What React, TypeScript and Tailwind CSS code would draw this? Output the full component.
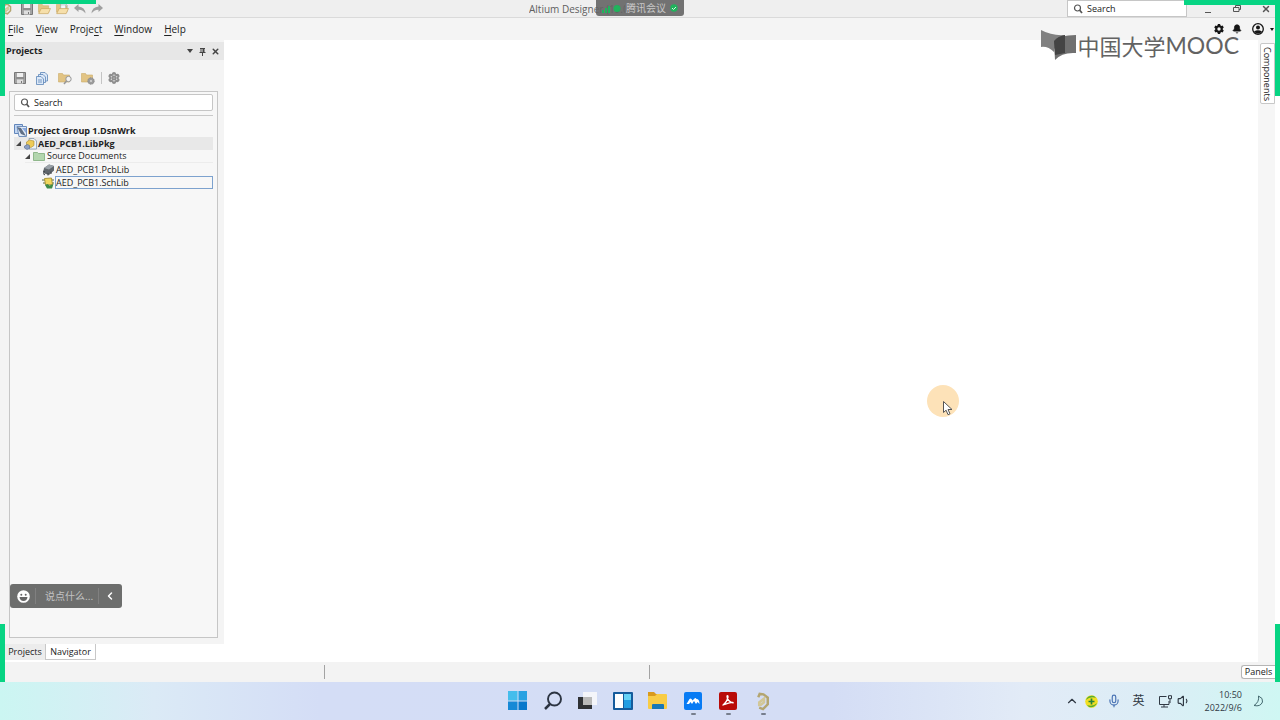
import type { ReactNode } from "react";
import {
  Bell,
  ChevronLeft,
  ChevronUp,
  Mic,
  Settings,
  Volume1,
  X,
} from "lucide-react";

function Disk({ className }: { className: string }) {
  return (
    <svg viewBox="0 0 12 12" className={className} aria-hidden>
      <path d="M.5.5h11v11H.5z" fill="#a4a4a4" stroke="#787878" />
      <path d="M3 1h6v4H3z" fill="#efefef" />
      <path d="M3 7.500h6v4H3z" fill="#dedede" />
      <path d="M2 6h8" stroke="#787878" />
      <path d="M7 9h1v2H7z" fill="#787878" />
    </svg>
  );
}

function FolderIcon({ className, badge }: { className: string; badge?: "search" | "gear" | "open" | "page" }) {
  return (
    <svg viewBox="0 0 14 13" className={className} aria-hidden>
      {badge === "page" && <path d="M5 .5h5l2 2V9H5z" fill="#fff" stroke="#8a9ba5" strokeWidth=".7" />}
      <path d="M.5 1.500h4l1 1.500h6v7H.5z" fill="#e2c484" stroke="#cbab68" strokeWidth=".6" />
      {badge === "page" && <path d="M5 2h5.500v5H5z" fill="#f4f8fa" stroke="#8a9ba5" strokeWidth=".6" />}
      {(badge === "open" || badge === "page") && (
        <path d="M3.500 6h10L11 11.500H.7z" fill="#f6dfaa" stroke="#c9a257" strokeWidth=".7" />
      )}
      {badge === "search" && (
        <>
          <circle cx="10.500" cy="7" r="2.700" fill="#f3f3f3" stroke="#979797" />
          <path d="M8.500 9L6 12" stroke="#979797" strokeWidth="1.500" />
        </>
      )}
      {badge === "gear" && (
        <>
          <circle cx="10" cy="9" r="3.200" fill="#9c9c9c" stroke="#8a8a8a" strokeDasharray="1.500 .7" />
          <circle cx="10" cy="9" r="1" fill="#d9d9d9" />
        </>
      )}
    </svg>
  );
}

function CurvedArrow({ className }: { className: string }) {
  return (
    <svg viewBox="0 0 12 10" className={className} aria-hidden>
      <path d="M0 4l4.500-4v2.500Q11 3 11.500 9.500 9 5.500 4.500 5.700V8z" fill="#a0a0a0" />
    </svg>
  );
}

function PagesIcon() {
  return (
    <svg viewBox="0 0 12 13" className="h-[13px] w-3" aria-hidden fill="#dce8f7" stroke="#5c85b8" strokeWidth=".8">
      <path d="M4.500.5h4.500l2.500 2.500v6h-7z" />
      <path d="M2.500 2.500H7L9.500 5v5.500h-7z" />
      <path d="M.5 4.500H5L7.500 7v5.500h-7z" />
      <path d="M2 8h4M2 10h4" />
    </svg>
  );
}

function AltiumMark({ className }: { className: string }) {
  return (
    <svg viewBox="0 0 16 20" className={className} aria-hidden fill="none" strokeWidth="2.600">
      <path d="M3 5.500L4.500 2l4 .5L13 6v7l-5 5-4-1.500" stroke="#b3a571" />
      <path d="M4 15v-4l5-4v4l-4 3" stroke="#d2c797" />
    </svg>
  );
}

function GroupIcon() {
  return (
    <svg viewBox="0 0 13 13" className="h-[13px] w-[13px]" aria-hidden>
      <path d="M.5.5h8v9h-8z" fill="#c3d7f2" stroke="#6286bb" />
      <path d="M3 2.500h9.500v10H5z" fill="#e2ecf8" stroke="#7190bd" />
      <path d="M3 3l4 1 5 8-5-2z" fill="#5f6f86" />
      <path d="M8 4h4v5z" fill="#8aaae0" />
    </svg>
  );
}

function PackageIcon() {
  return (
    <svg viewBox="0 0 13 12" className="h-3 w-[13px]" aria-hidden>
      <path d="M5 .5h5l2.500 2.500v8H5z" fill="#edf3f8" stroke="#8498ab" strokeWidth=".8" />
      <path d="M2.500 4l3-2 4.500 1v4.500l-3 2-4.500-1z" fill="#edcb58" stroke="#aa8a2c" strokeWidth=".6" />
      <path d="M.5 8l3-1.500 2 1v3L3 11.500.5 10z" fill="#8b9fc4" stroke="#55698e" strokeWidth=".6" />
    </svg>
  );
}

function PcbLibIcon() {
  return (
    <svg viewBox="0 0 13 12" className="h-3 w-[13px]" aria-hidden>
      <path d="M2 4l5-3.500L12 2v4.500L7 11 1 9z" fill="#60666c" />
      <path d="M2 4l5-3.500L12 2 7 5.500z" fill="#9aa1a8" />
      <path d="M1 7l2 1M1 9.500l2 1.500M6 9v2.500M9 7.500v2.500" stroke="#3e4347" />
    </svg>
  );
}

function SchLibIcon() {
  return (
    <svg viewBox="0 0 13 12" className="h-3 w-[13px]" aria-hidden>
      <path d="M0 3h12M1 6h11" stroke="#58683f" />
      <path d="M2.500 1.500l7-.5 1 6.500-7 .5z" fill="#f1d65d" stroke="#9b8526" strokeWidth=".8" />
      <path d="M3 8l2.500-1 2 1.500L11.500 7 10 11.500H5z" fill="#3f8b48" />
    </svg>
  );
}

function SearchField({ id, className }: { id: string; className: string }) {
  return (
    <div className={`flex items-center gap-1 border border-[#c6c6c6] bg-white pr-1 pl-[5px] ${className}`}>
      <label htmlFor={id} aria-label="Search">
        <svg viewBox="0 0 10 10" className="h-[10px] w-[10px]" fill="none" stroke="#555" aria-hidden>
          <circle cx="4.500" cy="4" r="3" strokeWidth="1.200" />
          <path d="M6.500 6l2.500 3" strokeWidth="1.800" />
        </svg>
      </label>
      <input
        id={id}
        placeholder="Search"
        className="w-full min-w-0 bg-transparent text-[9px] leading-3 outline-none placeholder:text-[#222]"
      />
    </div>
  );
}

const menus = [
  ["", "F", "ile"],
  ["", "V", "iew"],
  ["Proje", "c", "t"],
  ["", "W", "indow"],
  ["", "H", "elp"],
];

function TitleBar() {
  return (
    <header className="relative flex h-[18px] items-center border-b border-[#dadada] bg-[#efefef] pr-[9px]">
      <AltiumMark className="mr-2 ml-[2px] h-3 w-[11px]" />
      <div className="flex items-center gap-[5px]">
        <Disk className="h-3 w-3" />
        <FolderIcon badge="open" className="h-3 w-[13px]" />
        <FolderIcon badge="page" className="h-3 w-[13px]" />
        <CurvedArrow className="h-[10px] w-3" />
        <CurvedArrow className="h-[10px] w-3 -scale-x-100" />
      </div>
      {/* The meeting pill hangs over the end of the title, so clip it there. */}
      <h1 className="absolute left-[529px] w-24 overflow-hidden text-[10px] leading-[14px] whitespace-nowrap text-[#606060]">
        Altium Designer (19.0
      </h1>
      <SearchField id="app-search" className="ml-auto h-[17px] w-[120px]" />
      <div className="ml-4 flex items-center gap-[19px] text-[#555]">
        <button aria-label="Minimize" className="flex h-[10px] w-[10px] items-end justify-center">
          <span className="mb-px h-px w-[6px] bg-[#555]" />
        </button>
        <button aria-label="Restore">
          <svg viewBox="0 0 10 10" className="h-[10px] w-[10px]" fill="none" stroke="currentColor" aria-hidden>
            <path d="M3.500 3V1.500h5v4H7M1.500 3.500H7v4H1.500z" />
          </svg>
        </button>
        <button aria-label="Close">
          <X className="h-[10px] w-[10px]" strokeWidth={3.5} />
        </button>
      </div>
    </header>
  );
}

function MenuBar() {
  return (
    <nav className="flex h-[22px] items-center justify-between bg-[#f4f4f4] pr-[6px] pl-2">
      <div className="flex gap-3">
        {menus.map(([before, key, after]) => (
          <button key={key} className="text-[10px] leading-[14px] text-[#222]">
            {before}
            <span className="underline underline-offset-2">{key}</span>
            {after}
          </button>
        ))}
      </div>
      <div className="flex items-center gap-2 text-[#151515]">
        <button aria-label="Settings">
          <svg viewBox="0 0 12 12" className="h-[10px] w-[10px]" fill="currentColor" aria-hidden>
            <path
              fillRule="evenodd"
              d="M4.700 0h2.600l.4 1.600 1.100.7 1.600-.5 1.300 2.300L10.500 5.300v1.400l1.200 1.200-1.300 2.300-1.600-.5-1.100.7-.4 1.600H4.700l-.4-1.600-1.100-.7-1.600.5L.3 7.900l1.200-1.200V5.300L.3 4.100l1.300-2.300 1.600.5 1.100-.7zM6 4a2 2 0 100 4 2 2 0 000-4z"
            />
          </svg>
        </button>
        <button aria-label="Notifications">
          <Bell className="h-[10px] w-[10px]" fill="currentColor" />
        </button>
        <button aria-label="Account" className="ml-[2px] flex items-center gap-[6px]">
          <svg viewBox="0 0 12 12" className="h-3 w-3" aria-hidden>
            <circle cx="6" cy="6" r="5.300" fill="none" stroke="currentColor" strokeWidth="1.300" />
            <circle cx="6" cy="4.500" r="2" fill="currentColor" />
            <path d="M2 8.500q4-2.500 8 0Q6 13 2 8.500z" fill="currentColor" />
          </svg>
          <svg viewBox="0 0 4 3" className="h-[3px] w-1" aria-hidden>
            <path d="M0 0h4L2 3z" fill="currentColor" />
          </svg>
        </button>
      </div>
    </nav>
  );
}

function TreeRow({
  icon,
  label,
  indent,
  open,
  className = "",
}: {
  icon: ReactNode;
  label: string;
  indent: string;
  open?: boolean;
  className?: string;
}) {
  return (
    <li className={`flex h-[13px] items-center text-[9px] leading-3 text-[#222] ${indent} ${className}`}>
      {open && (
        <svg viewBox="0 0 5 5" className="mr-[3px] h-[5px] w-[5px]" aria-hidden>
          <path d="M5 0v5H0z" fill="#444" />
        </svg>
      )}
      {icon}
      <span className="ml-px">{label}</span>
    </li>
  );
}

function ProjectsPanel() {
  return (
    <aside className="flex w-[224px] shrink-0 flex-col">
      <div className="flex flex-1 flex-col bg-[#f4f4f4]">
        <div className="mt-[2px] ml-[5px] flex h-[18px] items-center justify-between bg-[#e7e7e7] pr-1 pl-px text-[#444]">
          <h2 className="text-[9px] leading-3 font-bold text-[#222]">Projects</h2>
          <div className="flex items-center gap-1">
            <button aria-label="Panel options" className="flex h-[9px] w-[9px] items-center justify-center">
              <svg viewBox="0 0 6 4" className="h-1 w-[6px]" aria-hidden>
                <path d="M0 0h6L3 4z" fill="currentColor" />
              </svg>
            </button>
            <button aria-label="Pin panel">
              <svg viewBox="0 0 9 9" className="h-[9px] w-[9px]" fill="none" stroke="currentColor" aria-hidden>
                <path d="M2 1.500h5M3 1.500v4M1.500 5.500h6M4.500 5.500V9" />
                <path d="M5.500 1.500v4" strokeWidth="2" />
              </svg>
            </button>
            <button aria-label="Close panel">
              <X className="h-[9px] w-[9px]" strokeWidth={4} />
            </button>
          </div>
        </div>
        <div className="flex h-[31px] items-center gap-[10px] pt-[5px] pl-[14px]">
          <button aria-label="Save">
            <Disk className="h-3 w-3" />
          </button>
          <button aria-label="Compile">
            <PagesIcon />
          </button>
          <button aria-label="Explore">
            <FolderIcon badge="search" className="h-[13px] w-[14px]" />
          </button>
          <button aria-label="Project options" className="-ml-px -mr-1">
            <FolderIcon badge="gear" className="h-[13px] w-[14px]" />
          </button>
          <span className="h-3 w-px bg-[#c4c4c4]" />
          <button aria-label="Panel settings" className="-ml-1">
            <Settings className="h-3 w-3 text-[#8d8d8d]" strokeWidth={4} />
          </button>
        </div>
        <div className="mr-[6px] mb-[6px] ml-[9px] flex-1 border border-[#c6c6c6] bg-[#f7f7f7] pt-[2px] pr-1 pl-1">
          <SearchField id="project-search" className="h-[17px] rounded-[2px]" />
          <div className="mt-1 mb-2 h-px bg-[#c9c9c9]" />
          <ul>
            <TreeRow icon={<GroupIcon />} label="Project Group 1.DsnWrk" indent="" className="font-bold" />
            <TreeRow
              icon={<PackageIcon />}
              label="AED_PCB1.LibPkg"
              indent="pl-[2px]"
              open
              className="bg-[#e8e8e8] font-bold"
            />
            <TreeRow
              icon={
                <svg viewBox="0 0 12 10" className="mr-px h-[10px] w-3" aria-hidden>
                  <path d="M.5 1.500h4l1 1h6v7H.5z" fill="#b3d6ae" stroke="#7dac7a" strokeWidth=".8" />
                </svg>
              }
              label="Source Documents"
              indent="ml-[11px]"
              open
              className="border-b border-[#ececec]"
            />
            <TreeRow icon={<PcbLibIcon />} label="AED_PCB1.PcbLib" indent="ml-[28px]" />
            <li className="ml-[28px] flex h-[13px] items-center text-[9px] leading-3 text-[#222]">
              <SchLibIcon />
              <span className="h-[13px] flex-1 border border-[#7da2ce] leading-[11px]">AED_PCB1.SchLib</span>
            </li>
          </ul>
        </div>
      </div>
      <div className="flex h-[18px] items-start bg-white pl-[5px] text-[9px] text-[#222]">
        <button className="h-4 w-10 bg-[#ececec] leading-4">Projects</button>
        <button className="h-4 w-[51px] border border-t-0 border-[#c8c8c8] bg-white leading-[15px]">Navigator</button>
      </div>
    </aside>
  );
}

function StatusBar() {
  return (
    <footer className="flex h-5 items-center bg-[#f3f3f3] pr-[5px]">
      <span className="h-[14px] w-[325px] border-r border-[#a3a3a3]" />
      <span className="h-[14px] w-[325px] border-r border-[#a3a3a3]" />
      <button className="ml-auto h-[14px] w-[34px] rounded-l-[3px] border border-r-0 border-[#b5b5b5] bg-white text-[9px] leading-3 text-[#222]">
        Panels
      </button>
    </footer>
  );
}

const pinned: { name: string; running?: boolean; icon: ReactNode }[] = [
  {
    name: "Start",
    icon: (
      <svg viewBox="0 0 20 20" className="h-5 w-5" aria-hidden>
        <path d="M0 0h9.500v9.500H0z" fill="#45bdec" />
        <path d="M10.500 0H19v9.500h-8.500z" fill="#28a1e2" />
        <path d="M0 10.500h9.500V19H0z" fill="#1689d6" />
        <path d="M10.500 10.500H19V19h-8.500z" fill="#0878cb" />
      </svg>
    ),
  },
  {
    name: "Search",
    icon: (
      <svg viewBox="0 0 20 20" className="h-5 w-5" fill="none" stroke="#2c3442" aria-hidden>
        <circle cx="11.500" cy="8" r="6.500" strokeWidth="1.900" />
        <path d="M7 13l-5 5" strokeWidth="2.500" />
      </svg>
    ),
  },
  {
    name: "Task view",
    icon: (
      <svg viewBox="0 0 20 20" className="h-5 w-5" aria-hidden>
        <path d="M5 1h14v13H5z" fill="#f4f5fa" />
        <path d="M0 6h14v12H0z" fill="#2f3135" />
        <path d="M5 6h9v8H5z" fill="#b9b9b9" />
      </svg>
    ),
  },
  {
    name: "Widgets",
    icon: (
      <svg viewBox="0 0 20 20" className="h-5 w-5" aria-hidden>
        <rect y="1" width="20" height="18" rx="1" fill="#155b9c" />
        <path d="M2 3h8v14H2z" fill="#fff" />
        <path d="M11 3h7v6h-7z" fill="#65d2f6" />
        <path d="M11 9h7v8h-7z" fill="#219de2" />
      </svg>
    ),
  },
  {
    name: "File Explorer",
    icon: (
      <svg viewBox="0 0 20 20" className="h-5 w-5" aria-hidden>
        <path d="M0 1h6l2 2h9v5H0z" fill="#d99a1c" />
        <path d="M0 5h7l2-2h9q1 0 1 1v13q0 1-1 1H1q-1 0-1-1z" fill="#f8cc45" />
        <path d="M4 18v-4q0-1 1-1h10q1 0 1 1v4z" fill="#1878b7" />
      </svg>
    ),
  },
  {
    name: "Tencent Meeting",
    running: true,
    icon: (
      <svg viewBox="0 0 18 18" className="h-[18px] w-[18px]" aria-hidden>
        <rect width="18" height="18" rx="2" fill="#087bf4" />
        <path d="M2.500 12l3-5q1-1 2 0l1 1.500 2-2q1-1 2 .5 3 0 3 5l-2-2-1.500 2-2-3-2 3-1.500-2-1.500 2z" fill="#fff" />
      </svg>
    ),
  },
  {
    name: "Acrobat",
    running: true,
    icon: (
      <svg viewBox="0 0 18 18" className="h-[18px] w-[18px]" aria-hidden>
        <rect width="18" height="18" rx="2" fill="#b90b08" />
        <path
          d="M4 13q4-3 5-8 0-2-1-1 0 5 6 7 1-2-10 2"
          fill="none"
          stroke="#fff"
          strokeWidth="1.300"
          strokeLinecap="round"
          strokeLinejoin="round"
        />
      </svg>
    ),
  },
  { name: "Altium Designer", running: true, icon: <AltiumMark className="h-[19px] w-4" /> },
];

function Taskbar() {
  return (
    <footer className="flex h-[38px] items-center bg-linear-[90deg,#cbf6f2_0%,#dbeaf6_12%,#d4ddf6_25%,#d4ddf5_65%,#e2ebf7_80%,#dcedf6_90%,#cff7f3_100%] pr-4">
      <div className="ml-[508px] flex gap-[15px]">
        {pinned.map((app) => (
          <button key={app.name} aria-label={app.name} className="relative flex h-5 w-5 items-center justify-center">
            {app.icon}
            {app.running && <span className="absolute -bottom-1 h-[2px] w-[5px] rounded-full bg-[#777e8d]" />}
          </button>
        ))}
      </div>
      <div className="ml-auto flex items-center text-[#303944]">
        <button aria-label="Show hidden icons" className="mr-[6px]">
          <ChevronUp className="h-[14px] w-[14px]" />
        </button>
        <button aria-label="Security" className="mr-[9px]">
          <svg viewBox="0 0 13 13" className="h-[13px] w-[13px]" aria-hidden>
            <circle cx="6.500" cy="6.500" r="6.300" fill="#f2df22" />
            <path d="M1 5Q3 0 9 1l2 2Q5 1 1 5zM12 8q-2 5-8 4L2 10q6 2 10-2z" fill="#55ad35" />
            <path d="M6.500 3.500v6M3.500 6.500h6" stroke="#26833b" strokeWidth="1.700" />
          </svg>
        </button>
        <button aria-label="Microphone" className="mr-3">
          <Mic className="h-[14px] w-[14px] text-[#4973b4]" />
        </button>
        <button className="mr-[13px] text-[12px] leading-4">英</button>
        <button aria-label="Network" className="mr-[5px]">
          <svg viewBox="0 0 14 13" className="h-[13px] w-[14px]" fill="none" stroke="currentColor" aria-hidden>
            <path d="M8.500 1.500H1.500v8h9.500V6M3 12h7M6 9.500V12M10.500.7h3v3h-3zM12 3.500V8" />
          </svg>
        </button>
        <button aria-label="Volume" className="mr-[14px]">
          <Volume1 className="h-[14px] w-[14px]" />
        </button>
        <button className="mr-[10px] text-right text-[9px] leading-[13px]">
          10:50
          <br />
          2022/9/6
        </button>
        <button aria-label="Focus assist">
          <svg viewBox="0 0 12 12" className="h-3 w-3" fill="none" stroke="#456a70" aria-hidden>
            <path d="M6.500 1q5 2 4 6-2 5-8.500 3.500Q7.500 7 6.500 1z" />
          </svg>
        </button>
      </div>
    </footer>
  );
}

function MoocWatermark() {
  return (
    <div className="absolute top-[29px] right-[41px] flex items-center text-[#636363]">
      <svg viewBox="0 0 36 31" className="h-[31px] w-9" aria-hidden>
        <path d="M0 1q11 6 24 5v10q-8 0-11 4v3Q7 17 0 18z" fill="#808080" />
        <path d="M13 12q5-6 22-6v18q-14-1-21 7z" fill="#707070" />
        <path d="M13 12q4-5 11-6v18l-10 2z" fill="#444" />
      </svg>
      <span className="flex items-center font-['Noto_Sans_CJK_SC',sans-serif] text-[22px] leading-[30px]">
        中国大学<span className="font-['Lato',sans-serif] text-[23px]">MOOC</span>
      </span>
    </div>
  );
}

function ChatBar() {
  return (
    <div className="absolute top-[584px] left-[10px] flex h-6 w-28 items-center rounded-[3px] bg-[#6d6e6d] text-white">
      <button aria-label="Emoji" className="ml-[7px]">
        <svg viewBox="0 0 13 13" className="h-[13px] w-[13px]" aria-hidden>
          <circle cx="6.500" cy="6.500" r="6.300" fill="#fff" />
          <circle cx="4.300" cy="4.700" r="1" fill="#666" />
          <circle cx="8.700" cy="4.700" r="1" fill="#666" />
          <path d="M2.500 7h8q-.5 4-4 4t-4-4z" fill="#666" />
        </svg>
      </button>
      <span className="ml-[5px] h-4 w-px bg-[#808080]" />
      <input
        aria-label="说点什么..."
        placeholder="说点什么..."
        className="ml-[9px] w-[53px] bg-transparent font-['Noto_Sans_CJK_SC',sans-serif] text-[10px] leading-4 outline-none placeholder:text-[#c2c2c2]"
      />
      <span className="h-4 w-px bg-[#808080]" />
      <button aria-label="Collapse" className="ml-[5px]">
        <ChevronLeft className="h-3 w-3" strokeWidth={3} />
      </button>
    </div>
  );
}

function MeetingPill() {
  return (
    <div className="absolute top-0 left-[596px] flex h-4 w-22 items-center justify-center gap-1 rounded-b-[3px] bg-[#646464]/90 text-[10px] leading-4 text-[#c8c8c8]">
      <svg viewBox="0 0 20 9" className="h-[9px] w-5" fill="#20b35c" aria-hidden>
        <path d="M0 6h2v3H0zM3 4h2v5H3zM6 2h2v7H6z" />
        <circle cx="15" cy="4.500" r="3.500" />
      </svg>
      腾讯会议
      <svg viewBox="0 0 8 8" className="h-2 w-2" aria-hidden>
        <circle cx="4" cy="4" r="3.700" fill="#20b35c" />
        <path d="M2 4l1.500 1.500L6 3" fill="none" stroke="#d8f5e3" />
      </svg>
    </div>
  );
}

/** Green corners drawn around the part of the screen that is being shared. */
function ShareFrame() {
  return (
    <div className="pointer-events-none absolute inset-x-0 top-0 bottom-[38px]" aria-hidden>
      <span className="absolute top-0 left-0 h-24 w-24 border-t-4 border-l-[5px] border-[#07d483]" />
      <span className="absolute top-0 right-0 h-24 w-24 border-t-[5px] border-r-[5px] border-[#07d483]" />
      <span className="absolute bottom-0 left-0 h-[58px] w-[5px] bg-[#07d483]" />
      <span className="absolute right-0 bottom-0 h-[58px] w-[5px] bg-[#07d483]" />
    </div>
  );
}

function Pointer() {
  return (
    <div className="pointer-events-none absolute top-[385px] left-[927px] h-8 w-8 rounded-full bg-[#fde2b8]" aria-hidden>
      <svg viewBox="0 0 10 15" className="absolute top-4 left-4 h-[15px] w-[10px]">
        <path d="M.5.5v11l2.600-2.300L5 13.700l2-.9-2-4.300h4z" fill="#fff" stroke="#555" />
      </svg>
    </div>
  );
}

export default function App() {
  return (
    <div className="relative flex min-h-screen flex-col overflow-hidden bg-white font-['Open_Sans','Noto_Sans_CJK_SC',sans-serif]">
      <TitleBar />
      <MenuBar />
      <div className="flex flex-1">
        <ProjectsPanel />
        <main className="flex-1 bg-white" />
        <div className="mr-[5px] w-[17px] bg-[#f6f6f6] pt-[3px] pl-[2px]">
          <button className="h-[61px] w-[15px] rounded-l-[2px] border border-[#c8c8c8] bg-white text-[9px] leading-[13px] text-[#222] [writing-mode:vertical-rl]">
            Components
          </button>
        </div>
      </div>
      <StatusBar />
      <Taskbar />
      <ShareFrame />
      <MeetingPill />
      <MoocWatermark />
      <ChatBar />
      <Pointer />
    </div>
  );
}
